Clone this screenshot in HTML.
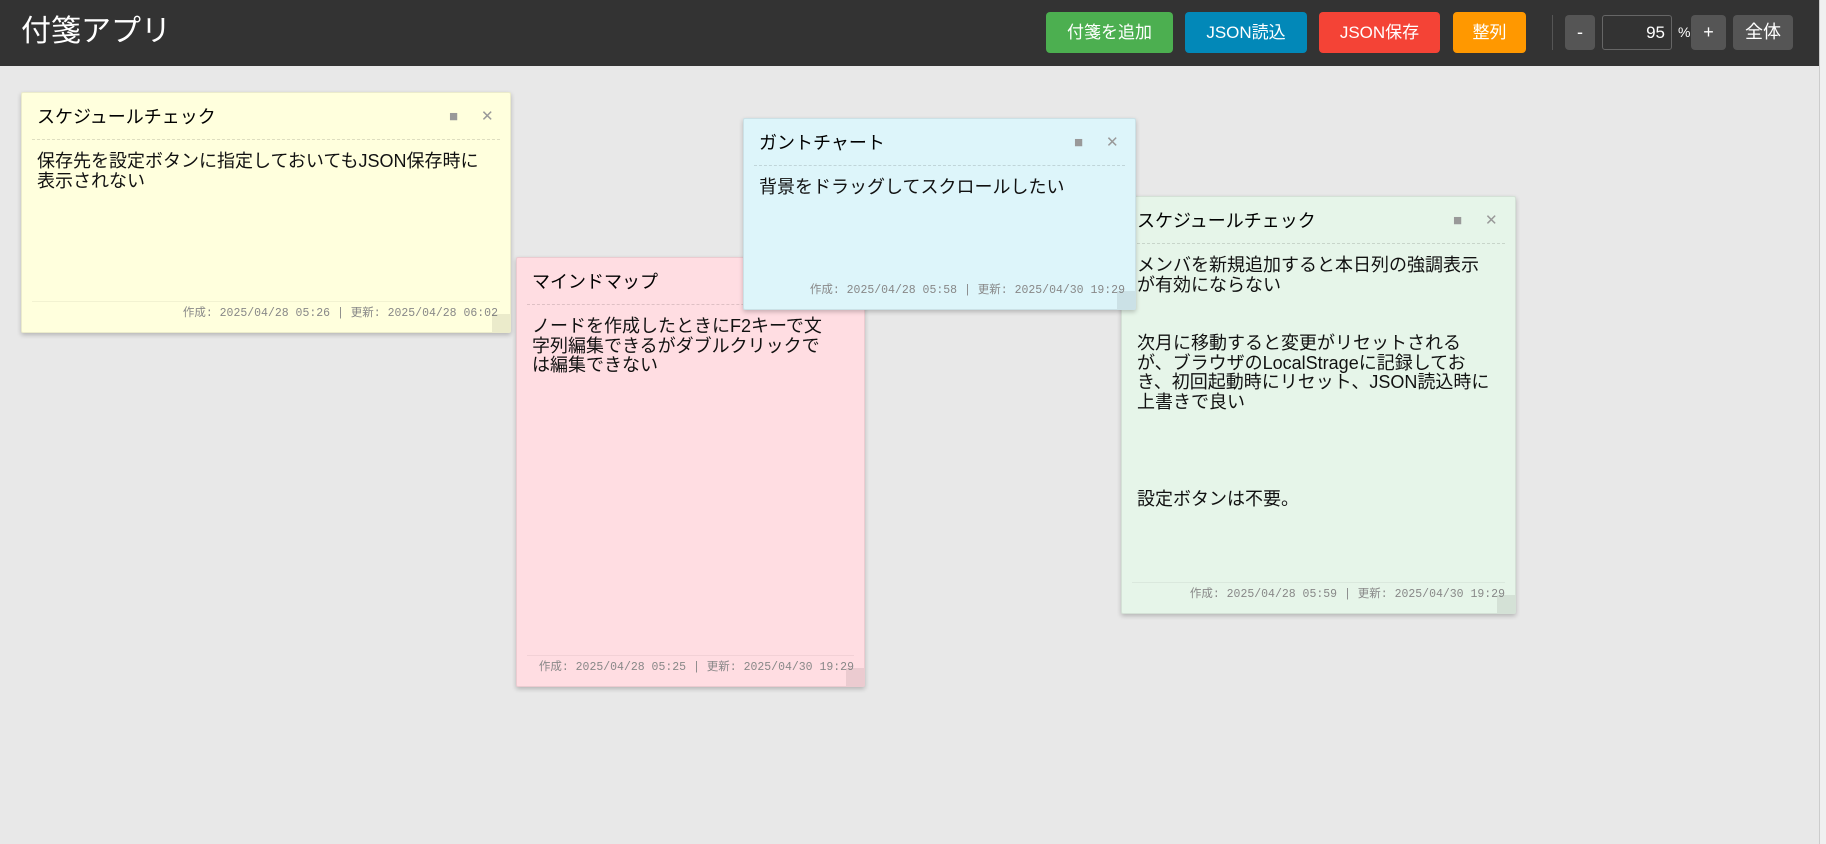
<!DOCTYPE html>
<html><head><meta charset="utf-8">
<style>
*{box-sizing:border-box;margin:0;padding:0}
body{width:1826px;height:844px;overflow:hidden;background:#e8e8e8;font-family:"Liberation Sans","Noto Sans CJK JP",sans-serif;position:relative}
.hdr{position:absolute;left:0;top:0;width:1826px;height:66px;background:#333;}
.title{position:absolute;left:21px;top:12px;color:#fff;font-size:30px;line-height:40px}
.btn{position:absolute;top:12px;height:41px;border-radius:4px;color:#fff;font-size:17px;line-height:41px;text-align:center}
.zb{position:absolute;top:15px;height:35px;border-radius:4px;background:#555;color:#fff;font-size:18px;line-height:35px;text-align:center}
.sb{position:absolute;right:0;top:0;width:7px;height:844px;background:#f0f0f0;border-left:1px solid #ccc}
.note{position:absolute;border:1px solid rgba(0,0,0,.08);box-shadow:0 2px 5px rgba(0,0,0,.22);border-radius:2px;overflow:hidden}
.nt{position:absolute;left:15px;top:12px;font-size:18px;line-height:24px;color:#000;font-weight:normal;white-space:nowrap}
.line{position:absolute;left:10px;right:10px;top:46px;border-top:1px dashed rgba(0,0,0,.13)}
.ic{position:absolute;top:13px;color:#999;font-size:15px;line-height:22px}
.bd{position:absolute;left:15px;top:59px;font-size:18px;line-height:19.5px;color:#111;white-space:pre}
.ft{position:absolute;right:12px;bottom:10px;font-family:"Liberation Mono","Noto Sans CJK JP",monospace;font-size:11.5px;line-height:16px;color:#888;white-space:nowrap}
.fl{position:absolute;left:10px;right:10px;bottom:30px;border-top:1px solid rgba(0,0,0,.05)}
.rh{position:absolute;right:0;bottom:0;width:18px;height:18px;background:rgba(0,0,0,.08)}
</style></head><body>
<div class="hdr">
<div class="title">付箋アプリ</div>
<div class="btn" style="left:1046px;width:127px;background:#4caf50">付箋を追加</div>
<div class="btn" style="left:1185px;width:122px;background:#0288b8">JSON読込</div>
<div class="btn" style="left:1319px;width:121px;background:#f44336">JSON保存</div>
<div class="btn" style="left:1453px;width:73px;background:#ff9800">整列</div>
<div style="position:absolute;left:1552px;top:15px;width:1px;height:35px;background:#555"></div>
<div class="zb" style="left:1565px;width:30px">-</div>
<div style="position:absolute;left:1602px;top:15px;width:70px;height:35px;border:1px solid #666;border-radius:3px;background:#333;color:#fff;font-size:17px;line-height:33px;text-align:right;padding-right:6px">95</div>
<div style="position:absolute;left:1678px;top:15px;color:#fff;font-size:14px;line-height:35px">%</div>
<div class="zb" style="left:1691px;width:35px">+</div>
<div class="zb" style="left:1733px;width:60px">全体</div>
</div>
<div class="sb"></div>

<div class="note" style="left:21px;top:92px;width:490px;height:241px;background:#ffffdd">
<div class="nt">スケジュールチェック</div><div class="ic" style="left:427px">■</div><div class="ic" style="left:459px">✕</div>
<div class="line"></div>
<div class="bd">保存先を設定ボタンに指定しておいてもJSON保存時に
表示されない</div>
<div class="fl"></div><div class="ft">作成: 2025/04/28 05:26 | 更新: 2025/04/28 06:02</div><div class="rh"></div>
</div>

<div class="note" style="left:516px;top:257px;width:349px;height:430px;background:#ffdde2">
<div class="nt">マインドマップ</div>
<div class="line"></div>
<div class="bd">ノードを作成したときにF2キーで文
字列編集できるがダブルクリックで
は編集できない</div>
<div class="fl"></div><div class="ft" style="right:10px">作成: 2025/04/28 05:25 | 更新: 2025/04/30 19:29</div><div class="rh"></div>
</div>

<div class="note" style="left:1121px;top:196px;width:395px;height:418px;background:#e6f5e9">
<div class="nt">スケジュールチェック</div><div class="ic" style="left:331px">■</div><div class="ic" style="left:363px">✕</div>
<div class="line"></div>
<div class="bd">メンバを新規追加すると本日列の強調表示
が有効にならない


次月に移動すると変更がリセットされる
が、ブラウザのLocalStrageに記録してお
き、初回起動時にリセット、JSON読込時に
上書きで良い




設定ボタンは不要。</div>
<div class="fl"></div><div class="ft" style="right:10px">作成: 2025/04/28 05:59 | 更新: 2025/04/30 19:29</div><div class="rh"></div>
</div>

<div class="note" style="left:743px;top:118px;width:393px;height:192px;background:#ddf5fa">
<div class="nt">ガントチャート</div><div class="ic" style="left:330px">■</div><div class="ic" style="left:362px">✕</div>
<div class="line"></div>
<div class="bd">背景をドラッグしてスクロールしたい</div>
<div class="ft" style="right:10px">作成: 2025/04/28 05:58 | 更新: 2025/04/30 19:29</div><div class="rh"></div>
</div>
</body></html>
